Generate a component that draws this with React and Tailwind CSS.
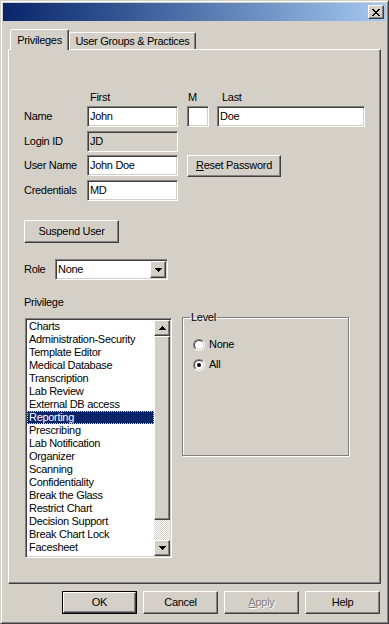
import React from "react";

// classic win9x bevels
const raised =
  "border border-t-white border-l-white border-r-[#404040] border-b-[#404040] shadow-[inset_-1px_-1px_0_#808080,inset_1px_1px_0_#d4d0c8]";
const sunken =
  "border border-t-[#808080] border-l-[#808080] border-r-white border-b-white shadow-[inset_1px_1px_0_#404040,inset_-1px_-1px_0_#d4d0c8]";

const privileges = [
  "Charts",
  "Administration-Security",
  "Template Editor",
  "Medical Database",
  "Transcription",
  "Lab Review",
  "External DB access",
  "Reporting",
  "Prescribing",
  "Lab Notification",
  "Organizer",
  "Scanning",
  "Confidentiality",
  "Break the Glass",
  "Restrict Chart",
  "Decision Support",
  "Break Chart Lock",
  "Facesheet",
  "Preferences Manager Mode",
];

function Arrow({ down }) {
  const rows = [1, 3, 5, 7];
  const list = down ? [...rows].reverse() : rows;
  return (
    <svg width="7" height="4" shapeRendering="crispEdges">
      {list.map((w, i) => (
        <rect key={i} x={(7 - w) / 2} y={i} width={w} height="1" fill="#000" />
      ))}
    </svg>
  );
}

function CloseGlyph() {
  const rows = [
    [0, 1, 6, 7],
    [1, 2, 5, 6],
    [2, 3, 4, 5],
    [3, 4],
    [2, 3, 4, 5],
    [1, 2, 5, 6],
    [0, 1, 6, 7],
  ];
  return (
    <svg width="8" height="7" shapeRendering="crispEdges">
      {rows.map((r, y) =>
        r.map((x) => <rect key={y + "-" + x} x={x} y={y} width="1" height="1" fill="#000" />)
      )}
    </svg>
  );
}

function TextBox({ value, w, disabled }) {
  return (
    <div
      className={`${sunken} h-[21px] pl-[2px] flex items-center ${disabled ? "bg-[#d4d0c8]" : "bg-white"}`}
      style={{ width: w }}
    >
      {value}
    </div>
  );
}

function Radio({ checked, label }) {
  return (
    <div className="flex items-center h-[13px] gap-[4px]">
      <div className="w-[12px] h-[12px] rounded-full border border-t-[#808080] border-l-[#808080] border-r-white border-b-white">
        <div className="w-[10px] h-[10px] rounded-full border border-t-[#404040] border-l-[#404040] border-r-[#d4d0c8] border-b-[#d4d0c8] bg-white flex items-center justify-center">
          {checked && <div className="w-[4px] h-[4px] rounded-full bg-black" />}
        </div>
      </div>
      <span>{label}</span>
    </div>
  );
}

export default function App() {
  return (
    <div className="w-[389px] h-[624px] bg-[#d4d0c8] p-[2px] flex flex-col border border-t-[#d4d0c8] border-l-[#d4d0c8] border-r-[#404040] border-b-[#404040] shadow-[inset_1px_1px_0_#fff,inset_-1px_-1px_0_#808080] font-['Liberation_Sans',Arial,sans-serif] text-[11px] tracking-[-0.3px] text-black leading-[13px]">
      {/* title bar */}
      <div className="h-[18px] bg-gradient-to-r from-[#0a246a] to-[#a6caf0] flex items-center justify-end pr-[2px]">
        <div className={`${raised} w-[16px] h-[14px] bg-[#d4d0c8] flex items-center justify-center`}>
          <CloseGlyph />
        </div>
      </div>

      <div className="px-[5px] flex flex-col">
        {/* tabs */}
        <div className="mt-[8px] h-[20px] flex items-end pl-[2px]">
          <div className="relative z-10 -mb-px h-[21px] w-[59px] bg-[#d4d0c8] border-t border-l border-t-white border-l-white border-r border-r-[#404040] shadow-[inset_-1px_0_0_#808080] rounded-t-[2px] flex items-center justify-center">
            Privileges
          </div>
          <div className="h-[17px] w-[127px] border-t border-l border-t-white border-l-white border-r border-r-[#404040] shadow-[inset_-1px_0_0_#808080] rounded-t-[2px] flex items-center justify-center">
            User Groups &amp; Practices
          </div>
        </div>

        {/* tab panel */}
        <div className="h-[535px] border border-t-white border-l-white border-r-[#404040] border-b-[#404040] shadow-[inset_-1px_-1px_0_#808080] pt-[41px] pl-[15px] flex flex-col">
          <div className="h-[13px] flex">
            <div className="w-[63px]" />
            <div className="w-[91px] pl-[3px]">First</div>
            <div className="w-[31px] pl-[10px]">M</div>
            <div className="pl-[13px]">Last</div>
          </div>

          <div className="mt-[2px] h-[21px] flex items-center">
            <div className="w-[63px]">Name</div>
            <TextBox value="John" w={91} />
            <div className="ml-[9px]">
              <TextBox value="" w={22} />
            </div>
            <div className="ml-[8px]">
              <TextBox value="Doe" w={148} />
            </div>
          </div>

          <div className="mt-[4px] h-[21px] flex items-center">
            <div className="w-[63px]">Login ID</div>
            <TextBox value="JD" w={91} disabled />
          </div>

          <div className="mt-[3px] h-[21px] flex items-center">
            <div className="w-[63px]">User Name</div>
            <TextBox value="John Doe" w={91} />
            <div className={`${raised} ml-[9px] w-[94px] h-[22px] flex items-center justify-center`}>
              <span>
                <u className="underline-offset-[1px]">R</u>eset Password
              </span>
            </div>
          </div>

          <div className="mt-[4px] h-[21px] flex items-center">
            <div className="w-[63px]">Credentials</div>
            <TextBox value="MD" w={91} />
          </div>

          <div className={`${raised} mt-[19px] w-[95px] h-[23px] flex items-center justify-center`}>
            Suspend User
          </div>

          <div className="mt-[16px] h-[21px] flex items-center">
            <div className="w-[31px]">Role</div>
            <div className={`${sunken} w-[113px] h-[21px] bg-white p-[1px] flex`}>
              <div className="flex-1 pl-[1px] flex items-center">None</div>
              <div className={`${raised} w-[16px] h-[17px] bg-[#d4d0c8] flex items-center justify-center`}>
                <Arrow down />
              </div>
            </div>
          </div>

          <div className="mt-[16px] h-[13px]">Privilege</div>

          <div className="mt-[2px] flex items-start">
            {/* privilege list */}
            <div className={`${sunken} mt-[7px] ml-px w-[147px] h-[240px] bg-white p-[1px] flex`}>
              <div className="flex-1 overflow-hidden">
                {privileges.map((p) => (
                  <div
                    key={p}
                    className={`h-[13px] pl-[2px] whitespace-nowrap ${
                      p === "Reporting"
                        ? "bg-[#0a246a] text-white outline-1 outline-dotted outline-[#d4d0c8] -outline-offset-1"
                        : ""
                    }`}
                  >
                    {p}
                  </div>
                ))}
              </div>
              <div className="w-[16px] flex flex-col">
                <div className={`${raised} h-[16px] bg-[#d4d0c8] flex items-center justify-center`}>
                  <Arrow />
                </div>
                <div className={`${raised} h-[184px] bg-[#d4d0c8]`} />
                <div className="flex-1 bg-[image:repeating-conic-gradient(#ffffff_0%_25%,#d4d0c8_0%_50%)] bg-[length:2px_2px]" />
                <div className={`${raised} h-[16px] bg-[#d4d0c8] flex items-center justify-center`}>
                  <Arrow down />
                </div>
              </div>
            </div>

            {/* level group */}
            <fieldset className="ml-[10px] w-[167px] h-[145px] border border-[#808080] shadow-[inset_1px_1px_0_#fff,1px_1px_0_#fff]">
              <legend className="ml-[7px] px-[1px]">Level</legend>
              <div className="pl-[10px] mt-[14px] flex flex-col gap-[7px]">
                <Radio label="None" />
                <Radio label="All" checked />
              </div>
            </fieldset>
          </div>
        </div>

        {/* dialog buttons */}
        <div className="mt-[7px] h-[23px] flex gap-[6px] pl-[54px]">
          <div className="w-[75px] h-[23px] border border-black">
            <div className={`${raised} w-full h-full flex items-center justify-center`}>OK</div>
          </div>
          <div className={`${raised} w-[75px] h-[23px] flex items-center justify-center`}>Cancel</div>
          <div className={`${raised} w-[75px] h-[23px] flex items-center justify-center text-[#808080] [text-shadow:1px_1px_0_#fff]`}>
            <span>
              <u className="underline-offset-[1px]">A</u>pply
            </span>
          </div>
          <div className={`${raised} w-[75px] h-[23px] flex items-center justify-center`}>Help</div>
        </div>
      </div>
    </div>
  );
}
